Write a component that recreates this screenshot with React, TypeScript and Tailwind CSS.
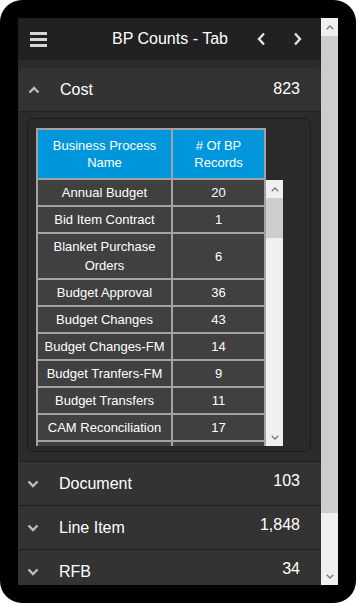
import React from "react";

const rows: [string, number][] = [
  ["Annual Budget", 20],
  ["Bid Item Contract", 1],
  ["Blanket Purchase Orders", 6],
  ["Budget Approval", 36],
  ["Budget Changes", 43],
  ["Budget Changes-FM", 14],
  ["Budget Tranfers-FM", 9],
  ["Budget Transfers", 11],
  ["CAM Reconciliation", 17],
];

const sections = [
  { name: "Document", count: "103" },
  { name: "Line Item", count: "1,848" },
  { name: "RFB", count: "34" },
];

function Chevron({ up }: { up?: boolean }) {
  return (
    <svg width="12" height="8" viewBox="0 0 12 8" className="shrink-0">
      <path
        d={up ? "M1.5 6.5 L6 2 L10.5 6.5" : "M1.5 1.5 L6 6 L10.5 1.5"}
        fill="none"
        stroke="#bdbdbd"
        strokeWidth="2.4"
      />
    </svg>
  );
}

function ScrollArrow({ up }: { up?: boolean }) {
  return (
    <div className="flex h-[18px] shrink-0 items-center justify-center bg-[#f0f0f0]">
      <svg width="8" height="5" viewBox="0 0 8 5">
        <path
          d={up ? "M0.7 4.3 L4 1 L7.3 4.3" : "M0.7 0.7 L4 4 L7.3 0.7"}
          fill="none"
          stroke="#7a7a7a"
          strokeWidth="1.3"
        />
      </svg>
    </div>
  );
}

function SectionRow({ name, count, up }: { name: string; count: string; up?: boolean }) {
  return (
    <div className="flex h-[43px] items-center bg-[#333333] pl-[9px] pr-[21px]">
      <Chevron up={up} />
      <span className="ml-[20px] text-[16px] text-white">{name}</span>
      <span className={`ml-auto text-[16px] text-white ${up ? "-mt-[2px]" : "-mt-[5px]"}`}>{count}</span>
    </div>
  );
}

export default function App() {
  return (
    <div className="h-[603px] w-[356px] bg-white" style={{ fontFamily: '"Liberation Sans", Arial, sans-serif' }}>
      <div className="flex h-full w-full rounded-[22px] bg-black p-[18px]">
        <div className="flex h-[567px] w-[303px] flex-col overflow-hidden bg-[#2b2b2b]">
          {/* header */}
          <div className="flex h-[42px] shrink-0 items-center bg-[#212121] px-[12px]">
            <div className="flex w-[17px] flex-col gap-[3px]">
              <div className="h-[3px] bg-[#d6d6d6]" />
              <div className="h-[3px] bg-[#d6d6d6]" />
              <div className="h-[3px] bg-[#d6d6d6]" />
            </div>
            <div className="flex-1 pl-[65px] text-[16px] text-white">BP Counts - Tab</div>
            <svg width="9" height="14" viewBox="0 0 9 14" className="mr-[27px]">
              <path d="M7 1.5 L2 7 L7 12.5" fill="none" stroke="#e0e0e0" strokeWidth="2.4" />
            </svg>
            <svg width="9" height="14" viewBox="0 0 9 14" className="mr-[7px]">
              <path d="M2 1.5 L7 7 L2 12.5" fill="none" stroke="#e0e0e0" strokeWidth="2.4" />
            </svg>
          </div>

          {/* cost section */}
          <div className="mt-[8px] ml-[1px] shrink-0 overflow-hidden rounded-t-[6px] border-b border-[#222]">
            <SectionRow name="Cost" count="823" up />
          </div>
          <div className="shrink-0 px-[9px] pb-[9px] pt-[6px] pr-[10px]">
            <div className="h-[334px] overflow-hidden rounded-[6px] border border-[#1c1c1c] bg-[#2a2a2a] pl-[8px] pt-[9px]">
              <div className="w-[230px] text-[13px] text-white">
                <div className="flex h-[52px] border-2 border-[#a3a3a3] bg-[#0096db] text-center leading-[17px]">
                  <div className="flex w-[135px] items-center justify-center border-r-2 border-[#a3a3a3]">
                    Business Process
                    <br />
                    Name
                  </div>
                  <div className="flex flex-1 items-center justify-center">
                    # Of BP
                    <br />
                    Records
                  </div>
                </div>
              </div>
              <div className="flex h-[266px] w-[247px]">
                <div className="w-[230px] overflow-hidden text-[13px] text-white">
                  {rows.map(([n, c]) => (
                    <div key={n} className="flex border-x-2 border-b-2 border-[#a3a3a3] bg-[#404040] text-center leading-[19px]">
                      <div className="flex w-[135px] items-center justify-center border-r-2 border-[#a3a3a3] px-[4px] py-[3px]">
                        {n}
                      </div>
                      <div className="flex flex-1 items-center justify-center py-[3px]">{c}</div>
                    </div>
                  ))}
                  <div className="flex h-[25px] border-x-2 border-[#a3a3a3] bg-[#404040]">
                    <div className="w-[135px] border-r-2 border-[#a3a3a3]" />
                  </div>
                </div>
                <div className="flex w-[17px] flex-col bg-[#f0f0f0]">
                  <ScrollArrow up />
                  <div className="h-[40px] shrink-0 bg-[#cdcdcd]" />
                  <div className="flex-1" />
                  <ScrollArrow />
                </div>
              </div>
            </div>
          </div>

          {sections.map((s) => (
            <div key={s.name} className="shrink-0 border-t border-[#1f1f1f]">
              <SectionRow name={s.name} count={s.count} />
            </div>
          ))}
        </div>

        {/* page scrollbar */}
        <div className="flex h-[567px] w-[17px] flex-col bg-[#f0f0f0]">
          <ScrollArrow up />
          <div className="h-[477px] shrink-0 bg-[#cdcdcd]" />
          <div className="flex-1" />
          <ScrollArrow />
        </div>
      </div>
    </div>
  );
}
